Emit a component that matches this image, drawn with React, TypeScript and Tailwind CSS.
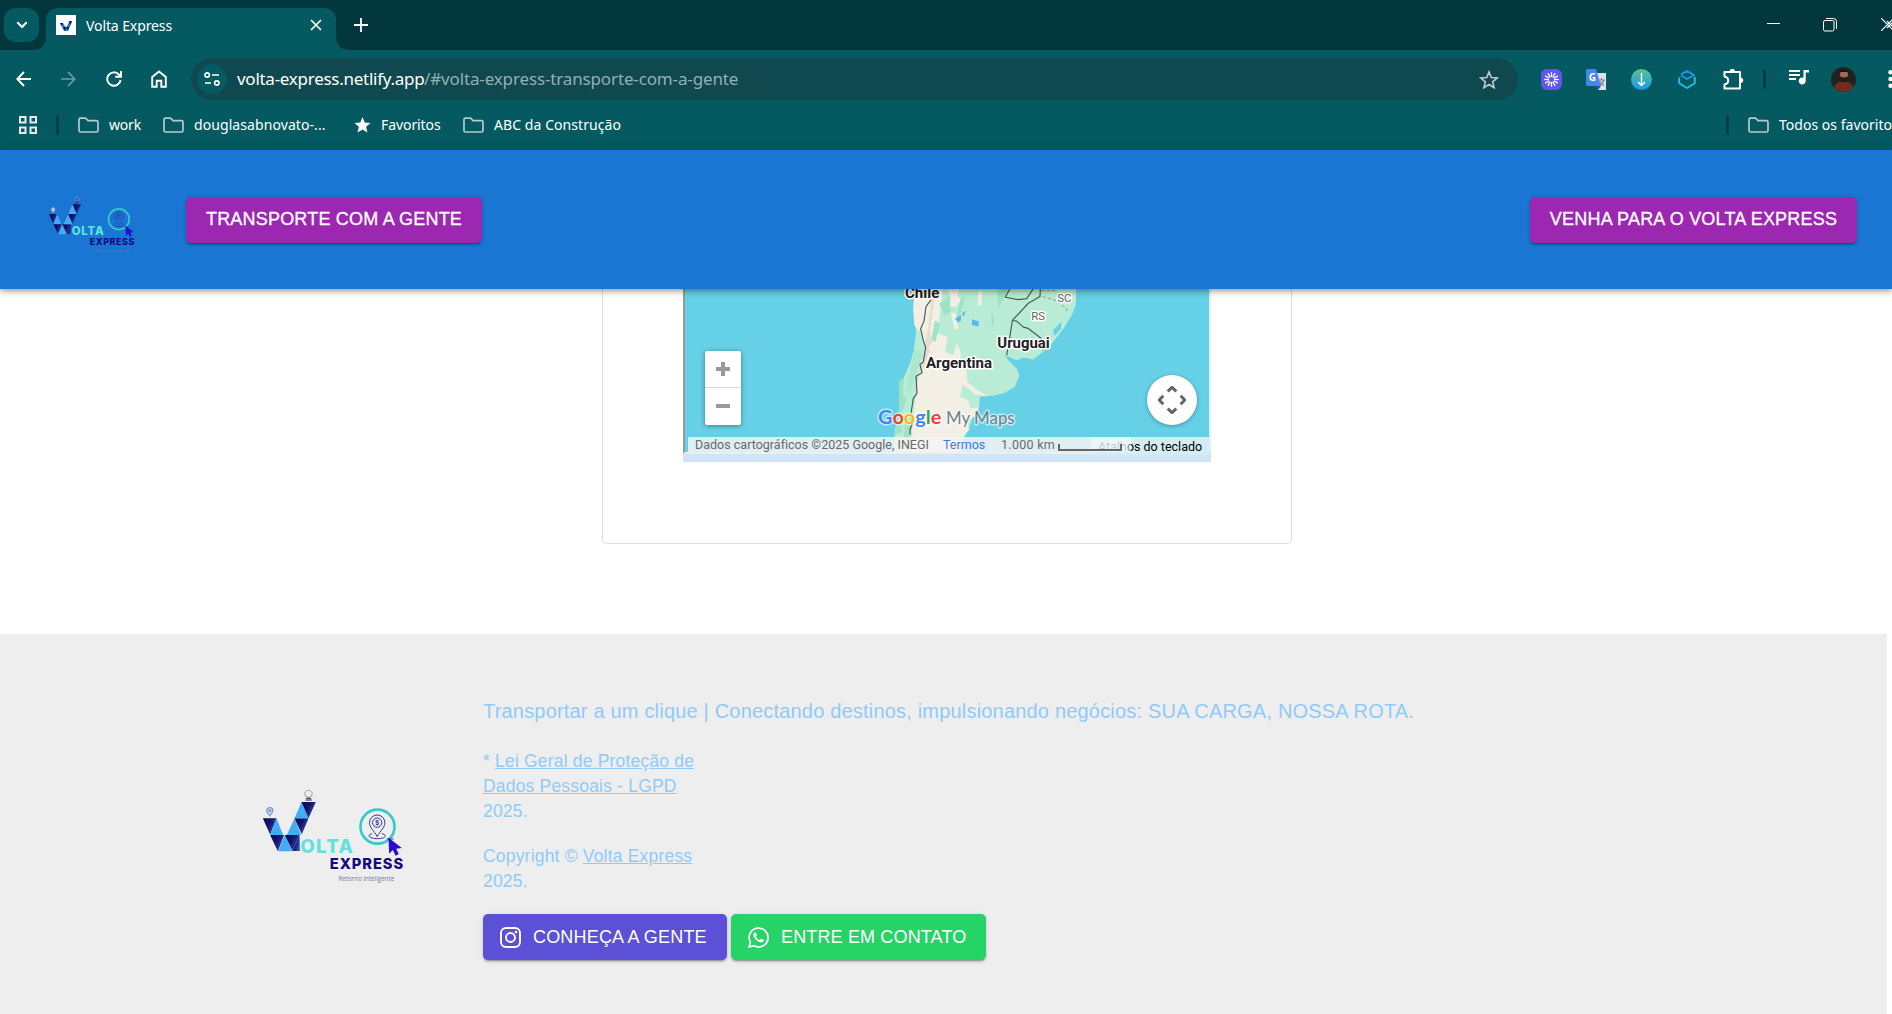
import React from "react";

const FolderIcon = () => (
  <svg width="21" height="17" viewBox="0 0 21 17" fill="none" stroke="#b9c9cb" strokeWidth="1.7" className="shrink-0">
    <path d="M1 3.2V13.4a1.6 1.6 0 0 0 1.6 1.6h15.8a1.6 1.6 0 0 0 1.6-1.6V5.2a1.6 1.6 0 0 0-1.6-1.6H10L7.6 1.2H2.4A1.4 1.4 0 0 0 1 2.6z" />
  </svg>
);

function Logo({ className }: { className: string }) {
  const dark = "url(#navy)";
  const light = "#45abf5";
  return (
    <svg viewBox="60 50 440 300" className={className}>
      <defs>
        <linearGradient id="navy" x1="0" y1="0" x2="1" y2="0.6">
          <stop offset="0" stopColor="#0a0a50" />
          <stop offset="0.5" stopColor="#14146e" />
          <stop offset="1" stopColor="#2f4fb5" />
        </linearGradient>
      </defs>
      <path d="M68 144h41l-19 49z" fill={dark} />
      <path d="M109 144l20 50H90z" fill={light} />
      <path d="M90 194h42l-19 49z" fill={dark} />
      <path d="M134 194l22 49h-42z" fill={light} />
      <path d="M134 194h44l-21 48z" fill={dark} />
      <path d="M163 144l20 50h-43z" fill={light} />
      <path d="M163 144h42l-20 48z" fill={dark} />
      <path d="M184 95l21 49h-42z" fill={light} />
      <path d="M184 95h43l-22 49z" fill={dark} />
      <path d="M178 194l-21 48h22z" fill={dark} />
      <g fill="none" stroke="#7d99c9" strokeWidth="4">
        <path d="M89 136c-6-8-9-11-9-15a9 9 0 0 1 18 0c0 4-3 7-9 15z" fill="#dfe8f8" />
        <circle cx="89" cy="121" r="3" />
      </g>
      <path d="M199 80c-9-8-5-20 6-20s15 12 6 20z" fill="none" stroke="#9a9aa5" strokeWidth="3" />
      <path d="M198 84h15M196 89h19" stroke="#222256" strokeWidth="3" />
      <circle cx="412" cy="169" r="51" fill="none" stroke="#34cbc9" strokeWidth="8" />
      <g fill="none" stroke="#34349b" strokeWidth="3">
        <path d="M411 199c-10-19-23-27-23-42a23 23 0 0 1 46 0c0 15-13 23-23 42z" />
        <circle cx="411" cy="157" r="14" />
        <path d="M396 190c-14 2-14 14 14 15 30 0 32-12 15-15M440 206h20" />
      </g>
      <text x="411" y="164" textAnchor="middle" fontSize="20" fontWeight="700" fill="#34349b" className="font-['Liberation_Sans']">$</text>
      <path d="M445 202l40 31-17 2 8 16-10 5-8-17-11 11z" fill="#2a0cd6" />
      <g className="font-[Inter]" fontWeight="800">
        <text x="180" y="247" fontSize="56" textLength="158" lengthAdjust="spacing" fill="#5fe3dc">OLTA</text>
        <text x="269" y="297" fontSize="44" textLength="220" lengthAdjust="spacing" fill="#130a80">EXPRESS</text>
      </g>
      <text x="295" y="331" fontSize="19" textLength="167" lengthAdjust="spacingAndGlyphs" fill="#77779a" className="font-['Open_Sans']">Retorno inteligente</text>
    </svg>
  );
}

function TabStrip() {
  return (
    <div className="flex h-[50px] bg-[#02383d] text-white">
      <div className="ml-1 mt-2 flex h-[34px] w-[35px] items-center justify-center rounded-[12px] bg-[#045a60]">
        <svg width="12" height="8" viewBox="0 0 12 8" fill="none" stroke="#fff" strokeWidth="2"><path d="M1.3 1.3 6 6l4.700-4.700" /></svg>
      </div>
      <div className="flex w-[7px] items-end">
        <svg width="7" height="14" viewBox="0 0 7 14" className="overflow-visible"><path d="M7 0v14h-14q14 0 14-14z" fill="#045a60" /></svg>
      </div>
      <div className="mt-2 flex h-[42px] w-[290px] rounded-t-[12px] bg-[#045a60] pl-[10px]">
        <svg width="20" height="20" viewBox="0 0 20 20" className="mt-[7px]">
          <path fill="#fff" d="M0 0h20v20H0z" />
          <path d="M4 8h3l3 5 3-6h3l-4 9H8z" fill="#2779cf" />
          <path d="M4 8h3l-1.500 3zM7 12h3l-1 4zM13 6h3l-2 4zM10 12h3l-1 3z" fill="#101055" />
        </svg>
        <span className="ml-[10px] mt-[8px] w-[224px] whitespace-nowrap text-[14px] leading-[20px] tracking-[-0.1px]">Volta Express</span>
        <svg width="12" height="12" viewBox="0 0 12 12" stroke="#fff" strokeWidth="1.7" className="mt-[11px]"><path d="m1 1 10 10M11 1 1 11" /></svg>
      </div>
      <svg width="14" height="14" viewBox="0 0 14 14" className="mt-[36px]"><path d="M0 0v14h14Q0 14 0 0z" fill="#045a60" /></svg>
      <svg width="14" height="14" viewBox="0 0 14 14" stroke="#fff" strokeWidth="1.8" className="ml-[4px] mt-[18px]"><path d="M7 0v14M0 7h14" /></svg>
      <div className="ml-auto flex w-[132px] shrink-0 items-start overflow-hidden pl-[7px]">
        <svg width="13" height="14" viewBox="0 0 13 14" className="mt-[17px] shrink-0"><path d="M0 6.500h13" stroke="#fff" /></svg>
        <svg width="14" height="14" viewBox="0 0 14 14" fill="none" stroke="#fff" className="ml-[43px] mt-[18px] shrink-0"><rect x=".5" y="2.500" width="10.500" height="10.500" rx="1.500" /><path d="M3 .5h7.500a3 3 0 0 1 3 3V11" /></svg>
        <svg width="13" height="13" viewBox="0 0 13 13" fill="none" stroke="#fff" strokeWidth="1.200" className="ml-[44px] mt-[18px] shrink-0"><path d="m0 0 13 13M0 13 13 0M6 3l6 6M6 10l6-6" /></svg>
      </div>
    </div>
  );
}

const Cell = ({ children, w = "w-[45px]" }: { children: React.ReactNode; w?: string }) => (
  <div className={`flex shrink-0 items-center justify-center ${w}`}>{children}</div>
);

const rays = [0, 30, 60, 90, 120, 150, 180, 210, 240, 270, 300, 330];

function Toolbar() {
  return (
    <div className="flex h-[58px] items-center overflow-hidden pl-px text-white">
      <Cell><svg width="15" height="16" viewBox="0 0 15 16" fill="none" stroke="#fff" strokeWidth="1.900"><path d="M15 8H1.500M8 1 1.300 8 8 15" /></svg></Cell>
      <Cell><svg width="15" height="16" viewBox="0 0 15 16" fill="none" stroke="#6b9da1" strokeWidth="1.700"><path d="M0 8h13.500M7 1l6.700 7L7 15" /></svg></Cell>
      <Cell><svg width="16" height="16" viewBox="0 0 16 16" fill="none" stroke="#fff" strokeWidth="1.900"><path d="M14.600 9A6.700 6.700 0 1 1 13 3.600L14.500 5.500" /><path d="M15 0v5.800H9.200" /></svg></Cell>
      <Cell><svg width="16" height="18" viewBox="0 0 16 18" fill="none" stroke="#fff" strokeWidth="1.900"><path d="M1.200 7 8 1.400 14.800 7v9.800H10.300v-6H5.700v6H1.200z" /></svg></Cell>
      <div className="ml-[10px] flex h-[42px] w-[1327px] shrink-0 items-center rounded-full bg-[#0f484e] pl-[6px]">
        <div className="flex size-[30px] items-center justify-center rounded-full bg-[#045a60]">
          <svg width="17" height="14" viewBox="0 0 17 14" fill="none" stroke="#fff" strokeWidth="1.700"><circle cx="3.200" cy="3" r="2.200" /><path d="M8 3h7M1 11h6" /><circle cx="12.800" cy="11" r="2.200" /></svg>
        </div>
        <div className="ml-[10px] flex w-[1239px] shrink-0 whitespace-nowrap text-[17px] leading-[24px]">
          <span className="w-[187px] tracking-[-0.27px]">volta-express.netlify.app</span>
          <span className="tracking-[-0.14px] text-[#93b0b3]">/#volta-express-transporte-com-a-gente</span>
        </div>
        <svg width="20" height="19" viewBox="0 0 20 19" fill="none" stroke="#b9c8ca" strokeWidth="1.700" className="ml-[3px] shrink-0"><path d="m10 2 2.300 5.500 5.900.5-4.500 3.900 1.400 5.800-5.100-3.100-5.100 3.100 1.400-5.800L1.800 8l5.900-.5z" /></svg>
      </div>
      <div className="w-[11px] shrink-0" />
      <Cell>
        <svg width="21" height="21" viewBox="0 0 21 21">
          <rect width="21" height="21" rx="6" fill="#5f58ec" />
          {rays.map((a) => <path key={a} d="M10.500 3.200V8" stroke="#fff" strokeWidth="1.300" transform={`rotate(${a} 10.5 10.5)`} />)}
        </svg>
      </Cell>
      <Cell>
        <svg width="21" height="21" viewBox="0 0 21 21"><path d="M9 4h11v17h-8z" fill="#dce1e6" /><path d="M12 11h7M15.500 9v2M18 11c-1 3-3 4.500-4.500 5.500M14 12.500c1 2 2.500 3 4 4" stroke="#74848c" fill="none" strokeWidth="1.200" /><path d="M1 0h9l5 17H2a2 2 0 0 1-2-2V1a1 1 0 0 1 1-1z" fill="#4585ec" /><path d="m10 17 5 0-3 4z" fill="#2b4db0" /><text x="2.800" y="12" fontSize="10" fontWeight="700" fill="#fff">G</text></svg>
      </Cell>
      <Cell>
        <svg width="21" height="21" viewBox="0 0 21 21"><defs><linearGradient id="dl" x2="0" y2="1"><stop stopColor="#5fc18d" /><stop offset="1" stopColor="#1599f0" /></linearGradient></defs><circle cx="10.500" cy="10.500" r="10.500" fill="url(#dl)" /><path d="M10.500 4v12.500M7 13l3.500 3.500L14 13" fill="none" stroke="#fff" strokeWidth="1.400" /></svg>
      </Cell>
      <Cell>
        <svg width="18" height="20" viewBox="0 0 18 20" fill="none" strokeWidth="1.900" strokeLinejoin="round"><path d="M3 6.500 9 10l7-4-7-4-6 3.400" stroke="#2397e3" /><path d="M1.200 8.500v5.800L9 19l7.800-4.700V8" stroke="#27bdee" /></svg>
      </Cell>
      <Cell>
        <svg width="21" height="21" viewBox="0 0 21 21" fill="none" stroke="#fff" strokeWidth="2" strokeLinejoin="round" className="ml-[3px]"><path d="M1.500 3h15.500v16.500H1.500V15.500c5-1 5-7 0-8z" /><path d="M7 2.500a2.300 2.300 0 0 1 4.600 0zM17.500 9a2.300 2.300 0 0 1 0 4.600z" fill="#fff" strokeWidth="1" /></svg>
      </Cell>
      <Cell w="w-[21px]"><div className="h-[20px] w-[3px] rounded-full bg-[#063e45]" /></Cell>
      <Cell w="w-[48px]">
        <svg width="20" height="16" viewBox="0 0 20 16" className="mb-1"><path d="M0 2h11M0 6h11M0 10h7" stroke="#fff" strokeWidth="2" /><path d="M14.500 1H20v2.500h-3.300V12a3.500 3.500 0 1 1-2.200-3.300z" fill="#fff" /></svg>
      </Cell>
      <Cell w="w-[41px]">
        <svg width="25" height="25" viewBox="0 0 25 25"><defs><clipPath id="face"><circle cx="12.500" cy="12.500" r="12.500" /></clipPath></defs><g clipPath="url(#face)"><path d="M0 0h25v25H0z" fill="#20221f" /><path d="M3 25c0-8 3-10 9-11 7 0 11 4 12 11z" fill="#722b1e" /><ellipse cx="13" cy="8" rx="4" ry="6" fill="#a06a55" /><path d="M9 5c1-4 7-4 8 0z" fill="#15120f" /><path d="M9 9q4 3 8 0l-1 6h-6z" fill="#2a1712" /></g></svg>
      </Cell>
      <Cell w="w-[52px]">
        <svg width="5" height="18" viewBox="0 0 5 18" fill="#fff"><circle cx="2.500" cy="2.200" r="2.200" /><circle cx="2.500" cy="9" r="2.200" /><circle cx="2.500" cy="15.800" r="2.200" /></svg>
      </Cell>
    </div>
  );
}

function Bookmarks() {
  return (
    <div className="flex h-[34px] items-center overflow-hidden whitespace-nowrap pl-[19px] text-[14px] leading-[20px] text-white">
      <svg width="18" height="18" viewBox="0 0 18 18" fill="none" stroke="#e4ecec" strokeWidth="2" className="shrink-0"><path d="M1 1h5.500v5.500H1zM11.500 1H17v5.500h-5.500zM1 11.500h5.500V17H1zM11.500 11.500H17V17h-5.500z" /></svg>
      <div className="ml-[19px] mr-[19px] h-[20px] w-[3px] shrink-0 rounded-full bg-[#063e45]" />
      <div className="flex w-[85px] shrink-0 items-center gap-[10px]"><FolderIcon /><span className="tracking-[-0.2px]">work</span></div>
      <div className="flex w-[190px] shrink-0 items-center gap-[10px]"><FolderIcon /><span className="tracking-[0.08px]">douglasabnovato-...</span></div>
      <div className="flex w-[110px] shrink-0 items-center gap-[10px]">
        <svg width="18" height="18" viewBox="0 0 18 18" className="shrink-0"><path fill="#fff" d="m9.500 1 2.200 5.400 5.800.5-4.400 3.800 1.300 5.700-4.900-3-5 3 1.400-5.700L1.500 6.900l5.800-.5z" /></svg>
        <span className="tracking-[-0.08px]">Favoritos</span>
      </div>
      <div className="flex shrink-0 items-center gap-[10px]"><FolderIcon /><span className="tracking-[0.07px]">ABC da Construção</span></div>
      <div className="ml-auto flex w-[166px] shrink-0 items-center overflow-hidden">
        <div className="mr-[19px] h-[20px] w-[3px] shrink-0 rounded-full bg-[#063e45]" />
        <FolderIcon />
        <span className="ml-[10px] tracking-[0.02px]">Todos os favoritos</span>
      </div>
    </div>
  );
}

function MapLand() {
  return (
    <svg viewBox="-525 15 1572 492" preserveAspectRatio="none" className="block h-full w-full font-[Roboto]">
      <path fill="#b9ecd6" d="M164 0L160 80L165 110L168 150L160 205L150 240L130 285L122 340L115 400L105 440L98 520H300L310 470L325 440L340 400L357 375L360 340L400 337L435 328L465 310L478 275L470 255L445 230L435 215L470 230L490 222L520 228L548 205L575 180L610 135L635 95L648 60V0z" />
      <path fill="#f3efe5" d="M164 0H250L242 70L232 150L262 158L255 205L280 215L290 178L303 205L300 240L320 265L322 295L350 320L383 337L345 334L330 318L308 305L300 340L325 350L330 375L355 372L345 400L320 410L328 440L300 470L290 520H158L156 440L168 330L178 265L197 195L185 150L163 125L160 80z" />
      <path fill="#f3efe5" d="M262 15h35l-5 20 12 15-15 18-20 2 4-30zM355 20h12l-3 45h-10zM272 85l16 5 8 45-12 2z" />
      <path fill="#e5ddd3" d="M215 20l12 5-10 60-8 60 8 30-15 25-8-15 12-60zM200 190l10 8-12 40-20 45 4-50z" />
      <path fill="#9fe2c5" d="M238 60l30-25 5 50-20 10zM225 110l15 10-14 55-12-6zM118 290l14-4-3 50 12 10-22 60 8 40-22 10 12-70zM136 400l18-12 4 30-12 50-16 10zM320 30l-20 20-10 55 12-18 12-45zM395 80l8 35-8 15zM430 0l20 12-35 60-4-50z" />
      <path fill="#9fe2c5" d="M165 200l25 10-16 40-20 70-18 5 12-55z" opacity=".5" />
      <path fill="#5bb9ee" d="M285 105l17-12 2 16-10 8zM305 90l14-10-8 18zM336 106l20 6v16l-20-4z" />
      <path fill="#66d0e6" d="M604 114l-25 26 4 16 20-18z" />
      <path fill="none" stroke="#b9ecd6" strokeWidth="5" d="M606 135l-30 34" />
      <g fill="none" stroke="#4d5a58" strokeWidth="3.500" strokeLinejoin="round">
        <path d="M213 48L198 68L192 112L182 135L190 170L197 192L190 235L180 243L186 268L168 278L171 330L160 345L153 390M158 418L150 440L150 455" />
        <path d="M450 14L436 40L475 47L500 44L520 14M541 14L540 38L505 58L457 110L448 170L440 215M457 110L470 112L490 130L505 134L545 165L548 200" />
        <path d="M545 20h45M548 38l40 12l30 22l5 15" strokeDasharray="9 7" stroke="#788a86" strokeWidth="2.500" />
      </g>
      <g stroke="#fff" strokeWidth="9" strokeLinejoin="round" className="[paint-order:stroke]">
        <g fontWeight="700" fill="#202124" fontSize="42">
          <text x="135" y="43" textLength="103" lengthAdjust="spacingAndGlyphs">Chile</text>
          <text x="198" y="254" textLength="198" lengthAdjust="spacingAndGlyphs">Argentina</text>
          <text x="412" y="192" textLength="157" lengthAdjust="spacingAndGlyphs">Uruguai</text>
        </g>
        <g fontSize="34" fill="#5c6366">
          <text x="514" y="108" textLength="41" lengthAdjust="spacingAndGlyphs">RS</text>
          <text x="592" y="53" textLength="42" lengthAdjust="spacingAndGlyphs">SC</text>
        </g>
        <g strokeOpacity=".6" className="font-[Lato]">
          <text x="54" y="422" fontSize="60" fontWeight="700" textLength="190" lengthAdjust="spacingAndGlyphs">
            <tspan fill="#4285f4">G</tspan><tspan fill="#ea4335">o</tspan><tspan fill="#fbbc04">o</tspan><tspan fill="#4285f4">g</tspan><tspan fill="#34a853">l</tspan><tspan fill="#ea4335">e</tspan>
          </text>
          <text x="258" y="423" fontSize="54" textLength="206" lengthAdjust="spacingAndGlyphs" fill="#6b8388">My Maps</text>
        </g>
      </g>
    </svg>
  );
}

function MapEmbed() {
  return (
    <div className="relative h-[173px] w-[528px] bg-[#d0e5f9] pb-[8px]">
      <div className="h-[165px] border-b-2 border-l-2 border-r-2 border-b-[#eeeeee] border-l-[#9a9a9a] border-r-[#e4eef4] bg-[#66d0e6]">
        <MapLand />
      </div>
      <div className="absolute left-[22px] top-[62px] flex h-[74px] w-[36px] flex-col rounded-[2px] bg-white shadow-[0_1px_5px_rgba(0,0,0,0.4)]">
        <div className="flex h-[37px] items-center justify-center border-b border-[#dcdcdc]"><svg width="14" height="14" viewBox="0 0 14 14"><path d="M7 0v14M0 7h14" stroke="#999" strokeWidth="4" /></svg></div>
        <div className="flex h-[36px] items-center justify-center"><svg width="14" height="4"><path d="M0 2h14" stroke="#999" strokeWidth="4" /></svg></div>
      </div>
      <div className="absolute left-[464px] top-[86px] flex size-[50px] items-center justify-center rounded-full bg-white shadow-[0_1px_4px_rgba(0,0,0,0.3)]">
        <svg width="28" height="28" viewBox="0 0 28 28" fill="none" stroke="#666" strokeWidth="3"><path d="m9.700 5.300 4.300-4 4.300 4M9.700 22.700l4.300 4 4.300-4M5.300 9.700l-4 4.300 4 4.300M22.700 9.700l4 4.300-4 4.300" /></svg>
      </div>
      <div className="absolute left-[5px] top-[148px] flex h-[15px] w-[521px] items-center whitespace-nowrap bg-[#f5f5f5]/85 font-[Roboto] text-[12.500px] leading-[15px] text-[#6a6a6a]">
        <span className="w-[249px] pl-[7px] tracking-[0.01px]">Dados cartográficos ©2025 Google, INEGI</span>
        <span className="w-[57px] pl-[6px] text-[#3f78e8]">Termos</span>
        <span className="w-[60px] pl-[7px] tracking-[0.28px]">1.000 km</span>
      </div>
      <div className="absolute left-[408px] top-[148px] flex h-[18px] w-[118px] items-center whitespace-nowrap bg-[#d3eef3] pl-[7px] pt-px font-[Roboto] text-[12.500px] leading-[15px] text-black">
        <span className="text-[#8d989b]">Atalh</span><span>os do teclado</span>
      </div>
      <div className="absolute left-[408px] top-[148px] h-[15px] w-[40px] bg-white/50" />
      <div className="absolute left-[375px] top-[155px] h-[7px] w-[64px] border-b-2 border-l-2 border-r-2 border-[#666]" />
    </div>
  );
}

const btn = "flex h-[46px] items-center whitespace-nowrap rounded-[5px] text-[18px] leading-[32px] shadow-[0_3px_1px_-2px_rgba(0,0,0,0.2),0_2px_2px_0_rgba(0,0,0,0.14),0_1px_5px_0_rgba(0,0,0,0.12)]";

export default function App() {
  return (
    <div className="flex h-[1014px] w-[1892px] flex-col overflow-hidden bg-white font-['Liberation_Sans',sans-serif]">
      <div className="h-[150px] shrink-0 bg-[#045a60] font-['Noto_Sans',sans-serif]">
        <TabStrip />
        <Toolbar />
        <Bookmarks />
      </div>

      <header className="z-10 flex h-[139px] shrink-0 items-start bg-[#1976d2] text-white shadow-[0_2px_4px_-1px_rgba(0,0,0,0.2),0_4px_5px_0_rgba(0,0,0,0.14),0_1px_10px_0_rgba(0,0,0,0.12)]">
        <Logo className="ml-[47px] mt-[45px] h-[61px] w-[90px]" />
        <button className={`${btn} ml-[49px] mt-[47px] w-[296px] justify-center bg-[#9c27b0] pb-[2px]`}>
          <span className="tracking-[0.2px] [-webkit-text-stroke:0.3px_white]">TRANSPORTE COM A GENTE</span>
        </button>
        <button className={`${btn} ml-auto mr-[35px] mt-[47px] w-[327px] justify-center bg-[#9c27b0] pb-[2px]`}>
          <span className="tracking-[0.2px] [-webkit-text-stroke:0.3px_white]">VENHA PARA O VOLTA EXPRESS</span>
        </button>
      </header>

      <main className="flex h-[345px] shrink-0 justify-center">
        <div className="ml-[2px] flex h-[255px] w-[690px] justify-center rounded-b-[5px] border border-t-0 border-[#dedede]">
          <MapEmbed />
        </div>
      </main>

      <footer className="mr-[5px] flex h-[380px] shrink-0 bg-[#eeeeee] text-[#90caf9]">
        <Logo className="ml-[260px] mt-[153px] h-[100px] w-[147px] shrink-0" />
        <div className="ml-[76px] mt-[62px]">
          <p className="whitespace-nowrap text-[20px] leading-[30px] tracking-[0.19px]">Transportar a um clique | Conectando destinos, impulsionando negócios: SUA CARGA, NOSSA ROTA.</p>
          <p className="mt-[23px] whitespace-nowrap text-[17.500px] leading-[25px] tracking-[0.19px]">
            * <a className="underline">Lei Geral de Proteção de</a><br /><a className="underline">Dados Pessoais - LGPD</a><br />2025.
          </p>
          <p className="mt-[20px] whitespace-nowrap text-[17.500px] leading-[25px] tracking-[0.19px]">
            Copyright © <a className="underline">Volta Express</a><br />2025.
          </p>
          <div className="mt-[20px] flex gap-1 text-white">
            <button className={`${btn} w-[244px] bg-[#5b50d6] pl-[17px]`}>
              <svg width="21" height="21" viewBox="0 0 21 21" fill="none" stroke="#fff" strokeWidth="1.900"><rect x="1" y="1" width="19" height="19" rx="5" /><circle cx="10.500" cy="10.500" r="4.500" /><circle cx="16" cy="5" r="1.300" fill="#fff" stroke="none" /></svg>
              <span className="mb-px ml-[12px] tracking-[0.18px]">CONHEÇA A GENTE</span>
            </button>
            <button className={`${btn} w-[255px] bg-[#25d366] pl-[17px]`}>
              <svg width="21" height="21" viewBox="0 0 24 24" fill="#fff"><path d="M17.472 14.382c-.297-.149-1.758-.867-2.030-.967-.273-.099-.471-.148-.670.150-.197.297-.767.966-.940 1.164-.173.199-.347.223-.644.075-.297-.150-1.255-.463-2.390-1.475-.883-.788-1.480-1.761-1.653-2.059-.173-.297-.018-.458.130-.606.134-.133.298-.347.446-.520.149-.174.198-.298.298-.497.099-.198.050-.371-.025-.520-.075-.149-.669-1.612-.916-2.207-.242-.579-.487-.500-.669-.510-.173-.008-.371-.010-.570-.010-.198 0-.520.074-.792.372-.272.297-1.040 1.016-1.040 2.479 0 1.462 1.065 2.875 1.213 3.074.149.198 2.096 3.200 5.077 4.487.709.306 1.262.489 1.694.625.712.227 1.360.195 1.871.118.571-.085 1.758-.719 2.006-1.413.248-.694.248-1.289.173-1.413-.074-.124-.272-.198-.570-.347" /><path d="M1.200 22.800l1.500-5.500A10.800 10.800 0 1 1 6.800 21.400z" fill="none" stroke="#fff" strokeWidth="2" /></svg>
              <span className="mb-px ml-[12px] tracking-[0.15px]">ENTRE EM CONTATO</span>
            </button>
          </div>
        </div>
      </footer>
    </div>
  );
}
